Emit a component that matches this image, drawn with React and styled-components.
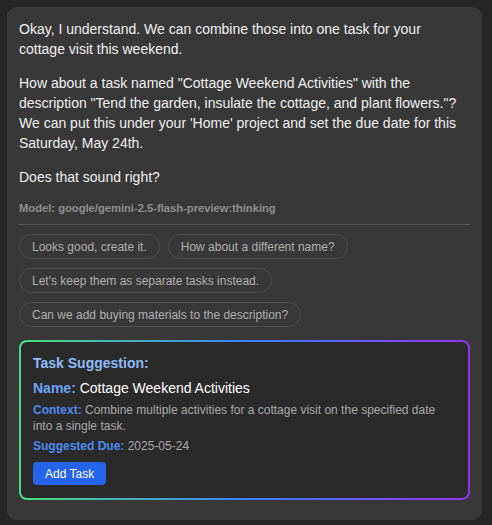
import React from 'react';
import styled, { createGlobalStyle } from 'styled-components';

const GlobalStyle = createGlobalStyle`
    html, body {
        margin: 0;
        padding: 0;
        background: #262626;
    }
    body {
        font-family: "Liberation Sans", Arial, sans-serif;
    }
`;

const Page = styled.div`
    padding: 7px 10px 5px 7px;
`;

const Bubble = styled.div`
    background: #383838;
    border-radius: 9px;
    padding: 12px 12px 20px 12px;
    color: #f2f2f2;
`;

const Paragraph = styled.p`
    margin: 0 0 14px 0;
    font-size: 14px;
    line-height: 20px;
    color: #f0f0f0;
    &:last-of-type {
        margin-bottom: 0;
    }
`;

const ModelLine = styled.div`
    font-size: 11.2px;
    font-weight: bold;
    color: #8f8f8f;
    line-height: 16px;
    margin-top: 13px;
    padding-bottom: 8px;
    border-bottom: 1px solid #555555;
`;

const Chips = styled.div`
    display: flex;
    flex-wrap: wrap;
    gap: 9px 8px;
    margin-top: 9px;
`;

const Chip = styled.button`
    font-family: inherit;
    font-size: 12px;
    color: #b0b0b0;
    background: transparent;
    border: 1px solid #4d4d4d;
    border-radius: 13px;
    height: 25px;
    padding: 0 12px;
    cursor: pointer;
`;

const Suggestion = styled.div`
    margin-top: 13px;
    border: 2px solid transparent;
    border-radius: 8px;
    background:
        linear-gradient(#2a2a2a, #2a2a2a) padding-box,
        linear-gradient(90deg, #4ade80 0%, #3b82f6 50%, #9333ea 100%) border-box;
    padding: 12px 12px 13px 12px;
`;

const Title = styled.div`
    font-size: 14px;
    font-weight: bold;
    color: #8fbcf8;
    line-height: 18px;
`;

const NameRow = styled.div`
    font-size: 14px;
    line-height: 18px;
    margin-top: 7px;
    color: #ffffff;
`;

const Label = styled.span`
    font-weight: bold;
    color: ${p => p.$light ? '#6ba6f8' : '#4c8cf0'};
`;

const Detail = styled.div`
    font-size: 12px;
    line-height: 16px;
    color: #a9a9a9;
    margin-top: ${p => p.$first ? '5px' : '4px'};
`;

const AddButton = styled.button`
    margin-top: 8px;
    font-family: inherit;
    font-size: 12px;
    color: #ffffff;
    background: #2563eb;
    border: none;
    border-radius: 4px;
    height: 23px;
    padding: 0 12px;
    cursor: pointer;
`;

const chips = [
    'Looks good, create it.',
    'How about a different name?',
    "Let's keep them as separate tasks instead.",
    'Can we add buying materials to the description?',
];

const App = () => {
    return (
        <Page>
            <GlobalStyle />
            <Bubble>
                <Paragraph>
                    Okay, I understand. We can combine those into one task for your cottage visit this weekend.
                </Paragraph>
                <Paragraph>
                    How about a task named "Cottage Weekend Activities" with the description "Tend the garden, insulate the cottage, and plant flowers."? We can put this under your 'Home' project and set the due date for this Saturday, May 24th.
                </Paragraph>
                <Paragraph>Does that sound right?</Paragraph>
                <ModelLine>Model: google/gemini-2.5-flash-preview:thinking</ModelLine>
                <Chips>
                    {chips.map(c => <Chip key={c}>{c}</Chip>)}
                </Chips>
                <Suggestion>
                    <Title>Task Suggestion:</Title>
                    <NameRow><Label $light>Name:</Label> Cottage Weekend Activities</NameRow>
                    <Detail $first><Label>Context:</Label> Combine multiple activities for a cottage visit on the specified date into a single task.</Detail>
                    <Detail><Label>Suggested Due:</Label> 2025-05-24</Detail>
                    <AddButton>Add Task</AddButton>
                </Suggestion>
            </Bubble>
        </Page>
    );
};

export default App;
